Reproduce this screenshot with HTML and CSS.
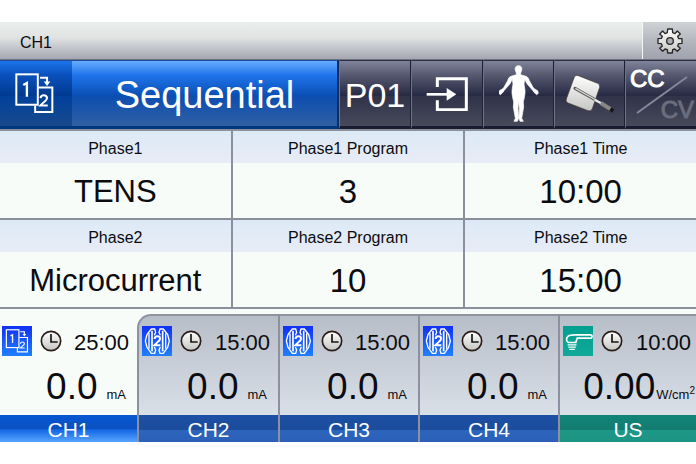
FILE: index.html
```
<!DOCTYPE html>
<html lang="en">
<head>
<meta charset="UTF-8">
<meta name="viewport" content="width=device-width, initial-scale=1.0">
<title>CH1</title>
<link rel="stylesheet" href="styles.css">
</head>
<body>

<!-- Shared icons -->
<svg class="icon-defs" aria-hidden="true">
    <defs>
        <linearGradient id="face" x1="0" y1="0" x2="0" y2="1">
            <stop offset="0" stop-color="#ffffff"/>
            <stop offset="1" stop-color="#c4c6c2"/>
        </linearGradient>
    </defs>
    <symbol id="icon-sequence" viewBox="44 176 118 124">
        <path d="M105 274v20h52v-74h-42" fill="none" stroke="#fff" stroke-width="6"/>
        <rect x="48" y="180" width="65" height="92" fill="none" stroke="#fff" stroke-width="6"/>
        <path d="M120 190h21v16" fill="none" stroke="#fff" stroke-width="6"/>
        <path d="M131 202h20l-10 13z" fill="#fff"/>
        <path d="M69 212l11-6v42" fill="none" stroke="#fff" stroke-width="7"/>
        <path d="M121 252q1-9 10-9t10 8q0 6-7 11t-13 12h22" fill="none" stroke="#fff" stroke-width="6"/>
    </symbol>
    <symbol id="icon-electrodes" viewBox="12 18 90 90">
        <g fill="none" stroke="#fff" stroke-width="4">
            <path d="M49 46l4-9-3-10H40L27 44l-5 19 5 19 13 18h10l3-10-4-9"/>
            <path d="M67 46l-4-9 3-10h10l13 17 5 19-5 19-13 18H66l-3-10 4-9"/>
            <path d="M33 40v46M83 40v46"/>
            <path d="M42 32v62M74 32v62" stroke-width="5"/>
        </g>
        <path d="M50 57q0-8 8-8t8 7q0 5-6 9l-11 11h18" fill="none" stroke="#fff" stroke-width="6"/>
    </symbol>
    <symbol id="icon-probe" viewBox="37 65 89 91">
        <path d="M122 92H72q-16 0-22 5-5 5-2 14l4 4h23l4-13h42q6-4 1-10" fill="none" stroke="#fff" stroke-width="5"/>
        <path d="M50 122h27M52 129h23M55 136h17" stroke="#fff" stroke-width="4"/>
    </symbol>
    <symbol id="icon-clock" viewBox="0 0 66 66">
        <circle cx="33" cy="33" r="29" fill="url(#face)" stroke="#2c1c18" stroke-width="5"/>
        <path d="M33 12v24h20" fill="none" stroke="#181414" stroke-width="5"/>
    </symbol>
</svg>

<main class="device">
    <header class="title-bar">
        <h1>CH1</h1>
        <button class="settings" aria-label="Settings">
            <svg width="26" height="26" viewBox="-39 -39 78 78">
                <g fill="url(#face)" stroke="#2a2826" stroke-width="4" stroke-linejoin="round">
                    <path d="M-7-36H7L8-25 15-22 22-30 31-21 23-14 26-7 36-7V7L26 8 23 15 31 22 22 31 14 24 8 26 7 36H-7L-8 26-15 24-22 31-31 22-23 15-26 8-36 7V-7L-26-8-23-14-31-21-22-30-15-22-8-25Z"/>
                    <circle r="10" fill="#a8abb2"/>
                </g>
            </svg>
        </button>
    </header>

    <nav class="toolbar">
        <button class="tool blue deep" aria-label="Mode">
            <svg width="39" height="41"><use href="#icon-sequence"/></svg>
        </button>
        <button class="tool blue mode-name">Sequential</button>
        <button class="tool program">P01</button>
        <button class="tool" aria-label="Load">
            <svg width="42" height="34" viewBox="577 188 126 102">
                <path d="M611 218v-25h87v93h-87v-28" fill="none" stroke="#fff" stroke-width="9"/>
                <path d="M579 240h64" stroke="#fff" stroke-width="8"/>
                <path d="M639 221l29 19-29 19z" fill="#fff"/>
            </svg>
        </button>
        <button class="tool" aria-label="Body area">
            <svg width="40" height="57" viewBox="99 151 120 171">
                <path fill="#fff" stroke="#fff" stroke-width="2" stroke-linejoin="round" d="M158 153c8 0 11 6 9 14l-3 8v5l16 5c6 2 8 7 10 13l13 23 12 7 2 8-5 4-7-6-5-7-17-20-7-13-2 14 3 19c1 14-3 24-5 35l1 15-6 34 5 9h-10l-3-9 1-30-2-25-2 25 2 30-4 9h-10l4-9-6-34 1-15c-2-11-6-21-5-35l3-19-2-14-7 13-17 20-5 7-7 6-5-4 2-8 12-7 13-23c2-6 4-11 10-13l16-5v-5l-3-8c-2-8 1-14 9-14z"/>
            </svg>
        </button>
        <button class="tool" aria-label="Electrode pad">
            <svg width="50" height="39" viewBox="307 175 150 117">
                <path d="M335 184q4-7 12-4l58 23q8 4 6 12l-22 64q-4 9-13 6l-60-23q-8-4-5-12z" fill="url(#face)" stroke="#41352e" stroke-width="2"/>
                <path d="M337 218l62 35" stroke="#555" stroke-width="9" stroke-linecap="round"/>
                <path d="M338 218l62 35" stroke="#d8d8d6" stroke-width="4"/>
                <path d="M396 252l22 12" stroke="#e8e8e6" stroke-width="7"/>
                <path d="M414 262l36 22" stroke="#898785" stroke-width="12"/>
                <path d="M443 280l9 6" stroke="#17151a" stroke-width="12"/>
            </svg>
        </button>
        <button class="tool current" aria-label="CC / CV">
            <span class="cc">CC</span>
            <svg width="52" height="38" viewBox="0 0 52 38"><path d="M1 37L51 1" stroke="#85889a" stroke-width="2"/></svg>
            <span class="cv">CV</span>
        </button>
    </nav>

    <section class="phases">
        <div class="field"><h2>Phase1</h2><p>TENS</p></div>
        <div class="field"><h2>Phase1 Program</h2><p class="number">3</p></div>
        <div class="field"><h2>Phase1 Time</h2><p class="number">10:00</p></div>
        <div class="field"><h2>Phase2</h2><p>Microcurrent</p></div>
        <div class="field"><h2>Phase2 Program</h2><p class="number">10</p></div>
        <div class="field"><h2>Phase2 Time</h2><p class="number">15:00</p></div>
    </section>

    <section class="channels">
        <button class="channel active">
            <span class="status">
                <svg class="badge" width="30" height="30"><use href="#icon-sequence" x="3" y="3" width="24" height="24"/></svg>
                <svg width="22" height="22"><use href="#icon-clock"/></svg>
                <span class="time">25:00</span>
            </span>
            <span class="output"><span class="level">0.0</span><span class="unit">mA</span></span>
            <span class="name">CH1</span>
        </button>
        <button class="channel first">
            <span class="status">
                <svg class="badge" width="30" height="30"><use href="#icon-electrodes"/></svg>
                <svg width="22" height="22"><use href="#icon-clock"/></svg>
                <span class="time">15:00</span>
            </span>
            <span class="output"><span class="level">0.0</span><span class="unit">mA</span></span>
            <span class="name">CH2</span>
        </button>
        <button class="channel">
            <span class="status">
                <svg class="badge" width="30" height="30"><use href="#icon-electrodes"/></svg>
                <svg width="22" height="22"><use href="#icon-clock"/></svg>
                <span class="time">15:00</span>
            </span>
            <span class="output"><span class="level">0.0</span><span class="unit">mA</span></span>
            <span class="name">CH3</span>
        </button>
        <button class="channel">
            <span class="status">
                <svg class="badge" width="30" height="30"><use href="#icon-electrodes"/></svg>
                <svg width="22" height="22"><use href="#icon-clock"/></svg>
                <span class="time">15:00</span>
            </span>
            <span class="output"><span class="level">0.0</span><span class="unit">mA</span></span>
            <span class="name">CH4</span>
        </button>
        <button class="channel ultrasound">
            <span class="status">
                <svg class="badge" width="30" height="30"><use href="#icon-probe"/></svg>
                <svg width="22" height="22"><use href="#icon-clock"/></svg>
                <span class="time">10:00</span>
            </span>
            <span class="output"><span class="level">0.00</span><span class="unit">W/cm<sup>2</sup></span></span>
            <span class="name">US</span>
        </button>
    </section>
</main>

</body>
</html>
```

FILE: styles.css
```
* {
    box-sizing: border-box;
}

body {
    margin: 0;
    padding: 22px 0;
    background-color: #ffffff;
    font-family: "Liberation Sans", Arial, sans-serif;
    color: #0c0c10;
}

h1, h2, p {
    margin: 0;
    font-weight: normal;
}

button {
    margin: 0;
    padding: 0;
    border: none;
    border-radius: 0;
    background: none;
    font-family: inherit;
    color: inherit;
    cursor: pointer;
}

svg {
    display: block;
    flex: none;
}

.icon-defs {
    position: absolute;
    width: 0;
    height: 0;
}

/* Title bar */
.title-bar {
    display: flex;
    justify-content: space-between;
    height: 38px;
    background: linear-gradient(#eaeeec, #e2e4e4 40%, #b4b7c0 85%, #a4a7b0);
    border-bottom: 1px solid #70747e;
}

.title-bar h1 {
    padding-left: 20px;
    font-size: 16px;
    line-height: 41px;
}

.settings {
    display: flex;
    align-items: center;
    justify-content: center;
    width: 54px;
    border-left: 1px solid #f4f6f6;
    background: linear-gradient(#d0d3d6, #b4b7be 50%, #a0a3ae);
}

/* Toolbar */
.toolbar {
    display: grid;
    grid-template-columns: 72fr 267fr 72fr 72fr 71fr 71fr 71fr;
    height: 69px;
}

.tool {
    display: flex;
    align-items: center;
    justify-content: center;
    min-width: 0;
    border-top: 1px solid #2a2e40;
    border-bottom: 3px solid #181c30;
    border-left: 1px solid #70748a;
    border-right: 1px solid #1c2034;
    background: linear-gradient(#80849a, #55586e 22%, #272a44 53%, #303349 54%, #474a5a);
    color: #ffffff;
}

.tool.blue {
    border-top-color: #1c4c9c;
    border-bottom-color: #003880;
    border-left: none;
    border-right: none;
    background: linear-gradient(#68acff, #1f74ec 22%, #0a50b4 53%, #0c4eb0 54%, #3060a4);
}

.tool.deep {
    padding-right: 4px;
    background: linear-gradient(#1c74ec, #0a50bc 22%, #003a90 53%, #00409c 54%, #184a8c);
}

.tool.mode-name {
    padding-top: 4px;
    border-right: 2px solid #0c2c68;
    font-size: 38px;
}

.program {
    padding-top: 3px;
    font-size: 34px;
}

/* CC, the slash and CV share one cell */
.tool.current {
    display: grid;
    grid-template: 1fr / 1fr;
    align-content: stretch;
    justify-content: stretch;
    padding: 5px 2px 3px 4px;
    border-right: none;
    font-size: 24px;
    line-height: 26px;
}

.current > * {
    grid-area: 1 / 1;
    place-self: center;
}

.current .cc {
    place-self: start;
    -webkit-text-stroke: 1px #ffffff;
}

.current .cv {
    place-self: end;
    color: #6a6d7c;
    -webkit-text-stroke: 1px #6a6d7c;
}

/* Phase settings */
.phases {
    display: grid;
    grid-template-columns: repeat(3, 1fr);
    gap: 2px;
    padding: 2px 0;
    background-color: #8c8f9c;
    text-align: center;
}

.field {
    background-color: #f8fcf8;
}

.field h2 {
    height: 32px;
    background: linear-gradient(#dceaf6, #e8ecf6);
    font-size: 16px;
    line-height: 35px;
}

.field p {
    height: 55px;
    font-size: 31px;
    line-height: 58px;
}

.field .number {
    font-size: 33px;
}

/* Channels */
.channels {
    display: grid;
    grid-template-columns: 137fr 141fr 140fr 140fr 138fr;
    padding-top: 5px;
    background-color: #f8fcf8;
}

.channel {
    display: flex;
    flex-direction: column;
    min-width: 0;
    border-top: 2px solid #9094a0;
    border-left: 2px solid #8c90a0;
    background: linear-gradient(#b8bec8, #dce2ea 85%);
}

.channel.active {
    border-color: transparent;
    border-left: none;
    background: none;
}

.channel.first {
    border-top-left-radius: 14px;
}

.status {
    display: flex;
    align-items: center;
    gap: 8px;
    width: 100%;
    padding: 10px 8px 0 3px;
}

.active .status {
    padding-left: 2px;
}

.ultrasound .status {
    padding-right: 5px;
}

.badge {
    background: linear-gradient(#1030f4, #2080ff);
}

.ultrasound .badge {
    background: linear-gradient(#00a090, #12a898);
}

.time {
    height: 30px;
    margin-left: auto;
    font-size: 22px;
    line-height: 34px;
}

.output {
    display: flex;
    align-items: baseline;
    justify-content: flex-end;
    gap: 9px;
    width: 100%;
    height: 59px;
    padding-right: 11px;
}

.level {
    font-size: 37px;
    line-height: 62px;
}

.unit {
    font-size: 13px;
}

.unit sup {
    font-size: 10px;
    line-height: 1;
}

.ultrasound .output {
    gap: 1px;
    padding-right: 1px;
}

.name {
    width: 100%;
    height: 27px;
    background: linear-gradient(#1c50a4, #1c4c9c 54%, #2c64bc 55%, #2c60b8);
    color: #ffffff;
    font-size: 21px;
    line-height: 29px;
}

.active .name {
    background: linear-gradient(#0858d4, #0a50c0 50%, #1468e4 55%, #58a4ff);
}

.ultrasound .name {
    background: linear-gradient(#108478, #147c70 54%, #1c9888 55%, #1c9484);
}
```
